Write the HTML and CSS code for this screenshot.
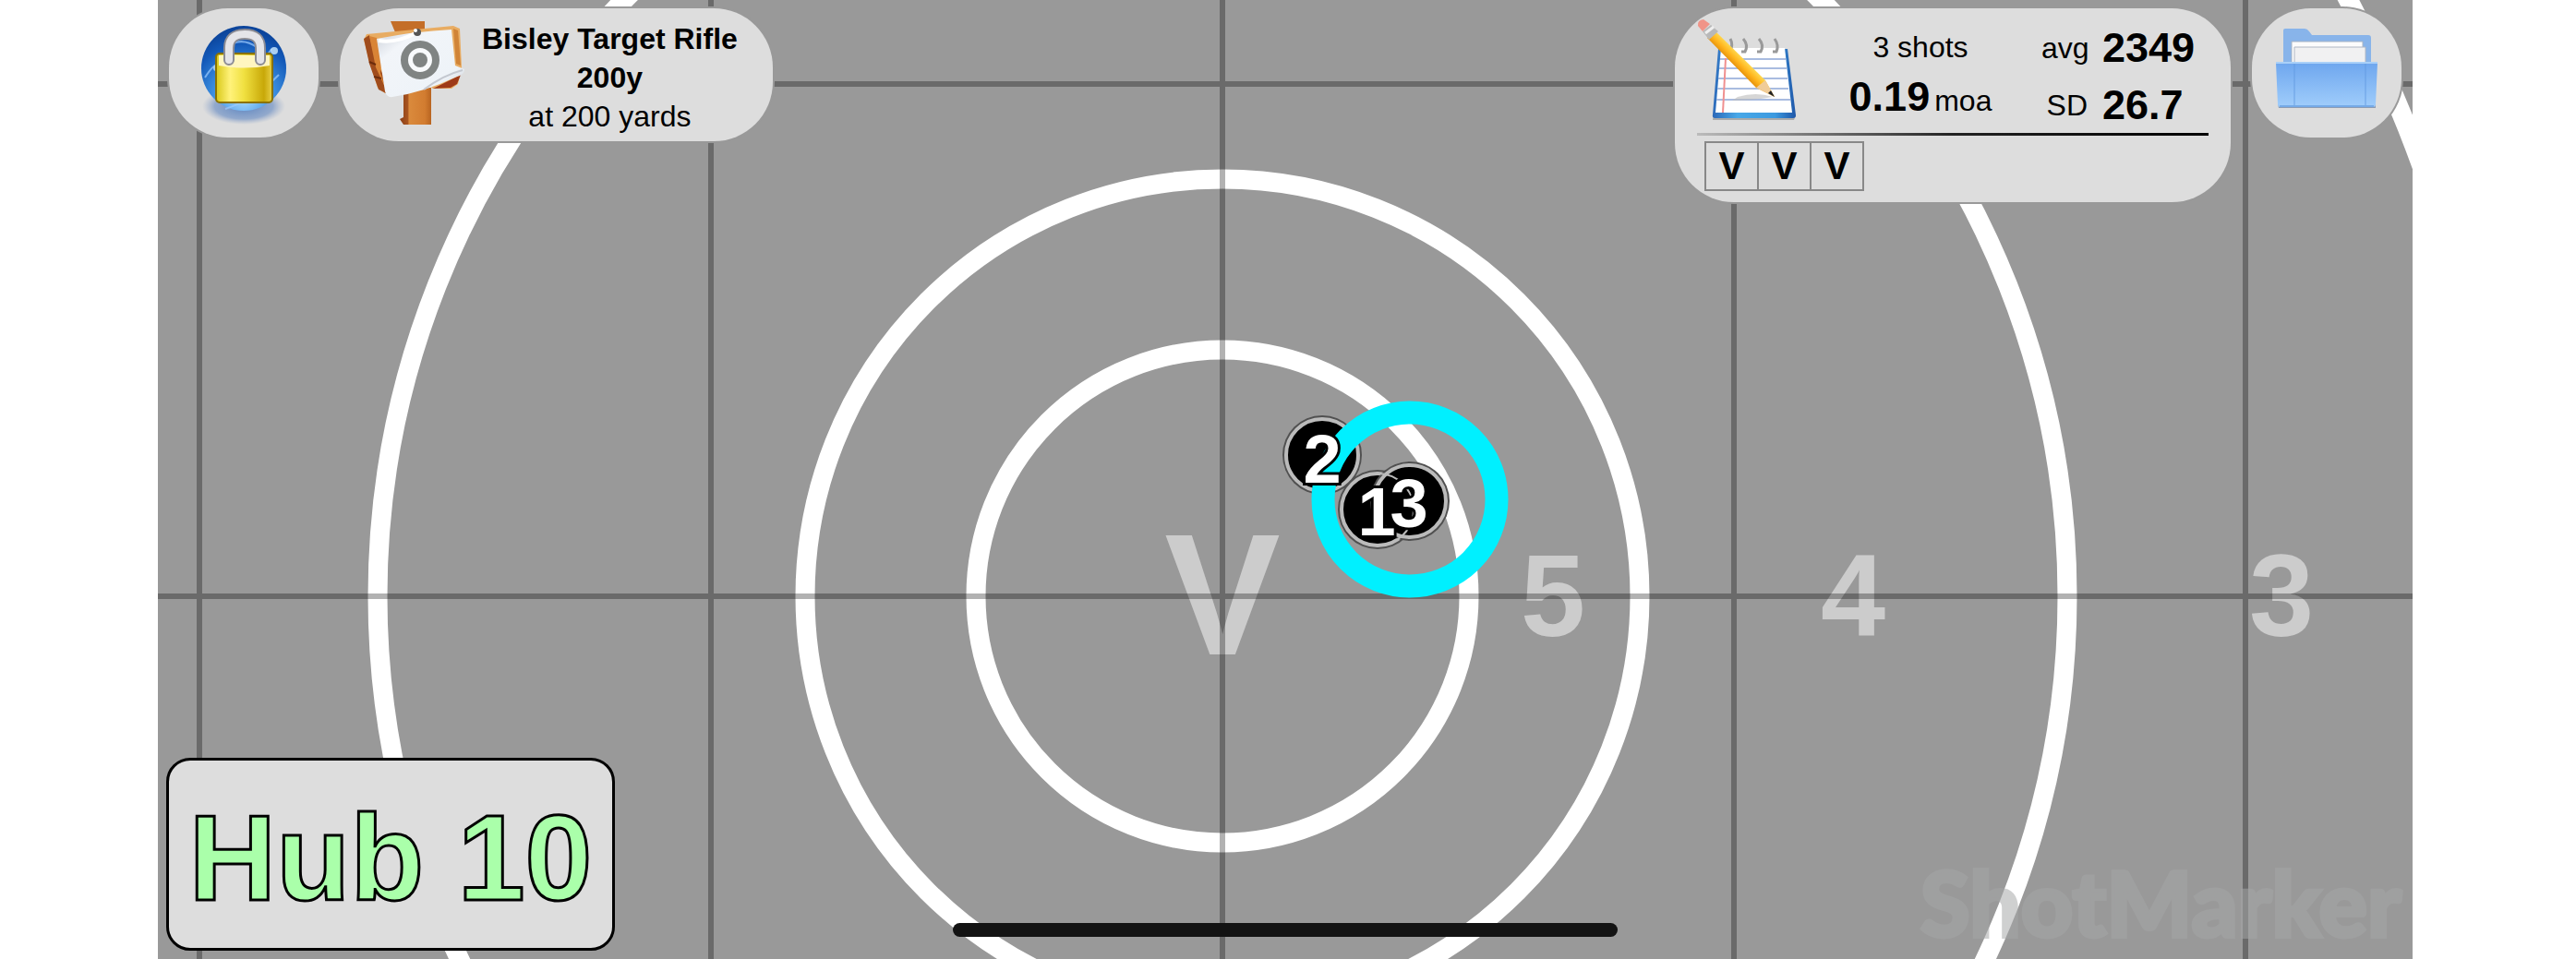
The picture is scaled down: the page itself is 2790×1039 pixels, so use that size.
FILE: index.html
```html
<!DOCTYPE html>
<html lang="en">
<head>
<meta charset="utf-8">
<title>ShotMarker</title>
<link rel="stylesheet" href="styles.css">
</head>
<body>
<main class="stage">
  <svg class="target" viewBox="0 0 2442 1039" preserveAspectRatio="xMidYMid slice" role="img" aria-label="Target face with shots">
    <g class="zones">
      <text x="1153" y="709" class="zone-v">V</text>
      <text x="1511" y="689">5</text>
      <text x="1836" y="689">4</text>
      <text x="2300" y="689">3</text>
    </g>
    <g class="rings">
      <circle cx="1153" cy="646" r="267"/>
      <circle cx="1153" cy="646" r="452"/>
      <circle cx="1153" cy="646" r="915"/>
      <circle cx="1153" cy="646" r="1380"/>
    </g>
    <path class="grid" d="M45 0V1039M599 0V1039M1153 0V1039M1707 0V1039M2261 0V1039M0 91H2442M0 646H2442"/>
    <g class="shot"><circle class="halo" cx="1261" cy="493" r="43"/><circle class="disc" cx="1261" cy="493" r="39"/></g>
    <circle class="group" cx="1356" cy="541" r="94"/>
    <g class="shot"><circle class="halo" cx="1321" cy="552" r="43"/><circle class="disc" cx="1321" cy="552" r="39"/></g>
    <g class="shot"><circle class="halo" cx="1356" cy="543" r="43"/><circle class="disc" cx="1356" cy="543" r="39"/></g>
    <circle class="overlap" cx="1321" cy="552" r="39"/>
    <g class="numbers">
      <text x="1261" y="523">2</text>
      <text x="1320" y="580">1</text>
      <text x="1355" y="571">3</text>
    </g>
    <text class="brand" x="2430" y="1015">ShotMarker</text>
  </svg>

  <header class="toolbar">
    <button class="pill pill-icon" type="button" aria-label="Lock">
      <svg class="icon" viewBox="0 0 112 112">
        <defs>
          <radialGradient id="globe" cx=".5" cy=".85" r=".8"><stop offset="0" stop-color="#a8dcff"/><stop offset=".45" stop-color="#3d8fe0"/><stop offset=".8" stop-color="#1258b8"/><stop offset="1" stop-color="#0c459c"/></radialGradient>
          <linearGradient id="brass"><stop offset="0" stop-color="#d8c818"/><stop offset=".25" stop-color="#fff27a"/><stop offset=".5" stop-color="#f0e040"/><stop offset=".85" stop-color="#c8a808"/><stop offset="1" stop-color="#e8d048"/></linearGradient>
          <radialGradient id="globeShadow"><stop offset="0" stop-color="#5c84c0"/><stop offset=".7" stop-color="#7f9cc8" stop-opacity=".8"/><stop offset="1" stop-color="#a0b0cc" stop-opacity="0"/></radialGradient>
        </defs>
        <ellipse cx="56" cy="92" rx="45" ry="20" fill="url(#globeShadow)"/>
        <circle cx="56" cy="51" r="46" fill="url(#globe)"/>
        <path d="M14 61Q24 45 30 46M86 30Q80 38 80 44M42 25Q56 18 70 28M36 95Q70 84 94 58" fill="none" stroke="#9cccff" stroke-width="2" opacity=".7"/>
        <circle cx="89" cy="32" r="4" fill="#d0ecff" opacity=".8"/>
        <circle cx="26" cy="51" r="3" fill="#d0ecff" opacity=".7"/>
        <rect x="26" y="35" width="61" height="53" rx="4" fill="url(#brass)" stroke="#8a7200" stroke-width="2"/>
        <path d="M29 37H84V48Q56 53 29 48Z" fill="#fff6c0"/>
        <path d="M40 42V29Q40 14 57 14Q74 14 74 29V42" fill="none" stroke="#8c8c94" stroke-width="12" stroke-linecap="round"/>
        <path d="M40 42V29Q40 14 57 14Q74 14 74 29V42" fill="none" stroke="#e4e4e8" stroke-width="8" stroke-linecap="round"/>
      </svg>
    </button>

    <button class="pill pill-target" type="button">
      <svg class="icon" viewBox="0 0 112 112">
        <defs>
          <linearGradient id="post"><stop offset="0" stop-color="#8a3f18"/><stop offset=".25" stop-color="#a8541f"/><stop offset=".3" stop-color="#da8a3c"/><stop offset=".8" stop-color="#d27c30"/><stop offset="1" stop-color="#b86420"/></linearGradient>
          <linearGradient id="paper" x2="1" y2="1"><stop offset="0" stop-color="#fff"/><stop offset=".12" stop-color="#dde1e8"/><stop offset=".25" stop-color="#f2f5f9"/><stop offset=".75" stop-color="#eef3f8"/><stop offset=".9" stop-color="#cfd3da"/><stop offset="1" stop-color="#fff"/></linearGradient>
        </defs>
        <path d="M30 0H67V12H35Z" fill="#c46e28"/>
        <path d="M44 72H74V112H44L40 106L44 104Z" fill="url(#post)"/>
        <path d="M4 14L98 5L105 8L107 50L103 68L96 73L76 73L60 60L24 78L16 72L7 44L1 20Z" fill="#e8ac62"/>
        <path d="M1 19L7 15L13 40L25 64L25 78L17 74L7 46Z" fill="#a04c1c"/>
        <path d="M7 16L15 18L20 46L19 56L26 76L14 50Z" fill="#d98436"/>
        <path d="M7 44L14 47M12 60L20 62" stroke="#6c2c0c" stroke-width="2"/>
        <path d="M76 73L106 58L102 68L95 72Z" fill="#9e3a18"/>
        <path d="M98 8L103 10L106 48L101 46Z" fill="#d08438"/>
        <path d="M15 19Q56 11 96 9L100 48L110 52Q110 58 102 60Q66 77 32 82Q26 83 24 76Z" fill="url(#paper)"/>
        <path d="M17 21Q36 24 57 13" fill="none" stroke="#fff" stroke-width="4"/>
        <path d="M66 74Q88 58 108 53" fill="none" stroke="#c4c8d0" stroke-width="2"/>
        <circle cx="62" cy="42" r="17" fill="#f8fafc" stroke="#808483" stroke-width="8"/>
        <circle cx="62" cy="42" r="8" fill="#808483"/>
        <circle cx="59" cy="12" r="4" fill="#555"/><circle cx="57" cy="10" r="2" fill="#fff"/>
      </svg>
      <span class="target-name"><strong>Bisley Target Rifle<br>200y</strong><br>at 200 yards</span>
    </button>

    <section class="pill pill-stats" aria-label="String statistics">
      <div class="stats-top">
        <svg class="icon" viewBox="0 0 112 112">
          <defs>
            <linearGradient id="padEdge"><stop offset="0" stop-color="#2c68b8"/><stop offset=".3" stop-color="#48a8e8"/><stop offset=".75" stop-color="#3c9ae0"/><stop offset="1" stop-color="#1f56a8"/></linearGradient>
            <linearGradient id="pencil" gradientUnits="userSpaceOnUse" x1="52" y1="44" x2="42" y2="54"><stop offset="0" stop-color="#ffd850"/><stop offset=".5" stop-color="#ffb41c"/><stop offset="1" stop-color="#e08a08"/></linearGradient>
          </defs>
          <path d="M17 109H105L107 104L18 102Z" fill="#888" opacity=".6"/>
          <path d="M23 32H98L107 104Q107 107 104 107H20Q16 107 17 103Z" fill="url(#padEdge)"/>
          <path d="M26 31H95L103 101H20Z" fill="#fff"/>
          <path d="M25 43H96M24 53H97M23 64H98M22 75H99M21 87H101" stroke="#a9bce0" stroke-width="2"/>
          <path d="M31 42L28 101" stroke="#f09090" stroke-width="2"/>
          <path d="M44 84Q64 78 82 84Q60 88 38 88Z" fill="#bbb" opacity=".6"/>
          <g fill="none" stroke="#999" stroke-width="3"><path d="M36 21Q40 28 35 36"/><path d="M50 21Q56 28 52 35H48"/><path d="M67 21Q73 28 69 35H65"/><path d="M84 21Q89 28 86 35H82"/></g>
          <path d="M11 20L20 13L74 66L84 84L64 74Z" fill="url(#pencil)"/>
          <path d="M64 74L74 66L84 84Z" fill="#f0cc98"/>
          <path d="M77 80L80 77L84 84Z" fill="#222"/>
          <path d="M6 13L15 6L23 13L13 22Z" fill="#b8b8b8"/>
          <path d="M9 15L18 8" stroke="#eee" stroke-width="3"/>
          <path d="M1 7Q0 1 7 0L14 5L6 13Z" fill="#f09488"/>
        </svg>
        <div class="shots"><span>3 shots</span><span><b>0.19</b><span class="unit">moa</span></span></div>
        <dl class="speeds">
          <dt>avg</dt><dd>2349</dd>
          <dt>SD</dt><dd>26.7</dd>
        </dl>
      </div>
      <hr class="rule">
      <ol class="scores"><li>V</li><li>V</li><li>V</li></ol>
    </section>

    <button class="pill pill-icon" type="button" aria-label="Open folder">
      <svg class="icon" viewBox="0 0 112 112">
        <defs>
          <linearGradient id="folder" x2="0" y2="1"><stop offset="0" stop-color="#6ea6ee"/><stop offset=".3" stop-color="#7db2f2"/><stop offset="1" stop-color="#a0cdfb"/></linearGradient>
        </defs>
        <path d="M9 10Q9 8 11 8H32Q35 8 37 11L40 15H101Q104 15 104 18V54H9Z" fill="#88b4ea"/>
        <path d="M18 22H95V50H18Z" fill="#fcfcfc" stroke="#a8b4c4" stroke-width="1"/>
        <path d="M21 28H98V50H21Z" fill="#f1f1f2" stroke="#b0b8c4" stroke-width="1"/>
        <path d="M3 90H109V94H4Z" fill="#8c9cb4"/>
        <path d="M1 45H111L109 90Q109 93 106 93H6Q3 93 3 90Z" fill="url(#folder)"/>
        <path d="M21 46V91M98 46V91" stroke="#5f98e0" stroke-width="2" opacity=".4"/>
        <path d="M1 45H111" stroke="#a9d0f8" stroke-width="2"/>
        <path d="M5 92H107" stroke="#4a88d4" stroke-width="1"/>
      </svg>
    </button>
  </header>

  <div class="hub">Hub 10</div>
  <div class="home-bar"></div>
</main>
</body>
</html>
```
FILE: styles.css
```css
* { box-sizing: border-box; }

body {
  margin: 0;
  background: #fff;
  color: #000;
  font-family: "Liberation Sans", Helvetica, Arial, sans-serif;
  font-size: 32px;
}

.stage {
  position: relative;
  display: flex;
  flex-direction: column;
  justify-content: space-between;
  min-height: 100vh;
  margin: 0 177px 0 171px;
  padding: 9px 12px 9px 9px;
  background: #999;
  overflow: hidden;
}

.target {
  position: absolute;
  inset: 0;
  width: 100%;
  height: 100%;
}

.rings circle { fill: none; stroke: #fff; stroke-width: 21px; }
.grid { fill: none; stroke: #000; stroke-opacity: .3; stroke-width: 6px; }
.zones { fill: #ccc; font-size: 126px; font-weight: bold; text-anchor: middle; }
.zone-v { font-size: 188px; }
.halo { fill: #505050; }
.disc { fill: #000; stroke: #bbb; stroke-width: 4px; }
.overlap { fill: none; stroke: #bbb; stroke-width: 2px; }
.group { fill: none; stroke: #00f0ff; stroke-width: 25px; }
.numbers {
  fill: #fff;
  stroke: #000;
  stroke-width: 6px;
  paint-order: stroke;
  font-size: 74px;
  font-weight: bold;
  text-anchor: middle;
}
.brand {
  fill: #a6a7a8;
  stroke: #a6a7a8;
  stroke-width: 4px;
  opacity: .53;
  font-family: Lato, sans-serif;
  font-size: 98px;
  font-weight: 900;
  text-anchor: end;
}

.toolbar {
  position: relative;
  display: flex;
  align-items: flex-start;
  gap: 23px;
  padding-left: 3px;
}

.pill {
  border: 0;
  border-radius: 64px;
  background: #ddd;
  box-shadow: 0 0 0 2px #999;
  color: inherit;
  font: inherit;
}

.icon { display: block; width: 112px; height: 112px; flex: none; }

.pill-icon { width: 162px; height: 140px; padding: 14px 25px; }

.pill-target {
  display: flex;
  align-items: flex-start;
  gap: 17px;
  padding: 12px 38px 6px 25px;
}
.pill-target .icon { margin-top: 2px; }
.target-name { line-height: 42px; text-align: center; }

.pill-stats {
  width: 602px;
  margin-left: auto;
  padding: 12px 24px;
}
.stats-top { display: flex; height: 123px; }
.shots {
  display: flex;
  flex-direction: column;
  width: 210px;
  margin-left: 25px;
  padding-top: 3px;
  line-height: 54px;
  text-align: center;
  white-space: nowrap;
}
.shots b, .speeds dd { font-size: 45px; font-weight: bold; }
.unit { margin-left: 5px; }
.speeds {
  display: grid;
  grid-template-columns: 50px auto;
  column-gap: 16px;
  align-content: start;
  margin: 0 0 0 26px;
  line-height: 62px;
}
.speeds dt { text-align: right; }
.speeds dd { margin: 0; }

.rule {
  height: 3px;
  margin: 0;
  border: 0;
  background: linear-gradient(90deg, #bbb, #222 50%, #000);
}
.scores {
  display: flex;
  margin: 6px 0 0 8px;
  padding: 0;
  list-style: none;
  font-size: 42px;
  font-weight: bold;
}
.scores li {
  width: 59px;
  height: 54px;
  margin-right: -2px;
  border: 2px solid #888;
  line-height: 50px;
  text-align: center;
}

.hub {
  position: relative;
  align-self: flex-start;
  width: 486px;
  height: 209px;
  padding-top: 4px;
  border: 3px solid #000;
  border-radius: 26px;
  background: #ddd;
  color: #afa;
  font-size: 131px;
  font-weight: bold;
  line-height: 203px;
  text-align: center;
  white-space: nowrap;
  -webkit-text-stroke: 3px #000;
}

.home-bar {
  position: absolute;
  left: 50%;
  bottom: 24px;
  width: 720px;
  height: 15px;
  margin-left: -360px;
  border-radius: 8px;
  background: #131313;
}
```
